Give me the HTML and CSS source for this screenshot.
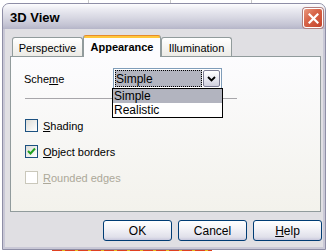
FILE: index.html
```html
<!DOCTYPE html>
<html>
<head>
<meta charset="utf-8">
<title>3D View</title>
<link rel="stylesheet" href="styles.css">
</head>
<body>
<div class="desk">
  <div class="window">
    <div class="titlebar">
      <span class="title">3D View</span>
      <span class="close"><svg width="11" height="11" viewBox="0 0 11 11"><path d="M1.5 1.5 L9.5 9.5 M9.5 1.5 L1.5 9.5" stroke="#fff" stroke-width="2.2" stroke-linecap="square"/></svg></span>
    </div>
    <div class="body">
      <div class="tabs">
        <div class="tab">Perspective</div>
        <div class="tab active">Appearance</div>
        <div class="tab">Illumination</div>
      </div>
      <div class="panel">
        <div class="scheme">
          <span class="label">Sche<u>m</u>e</span>
          <div class="combo">
            <div class="field"><span class="field-text">Simple</span></div>
            <span class="combo-btn"><svg width="9" height="6" viewBox="0 0 9 6"><path d="M1 1 L4.5 4.5 L8 1" fill="none" stroke="#000" stroke-width="1.8"/></svg></span>
            <ul class="dropdown">
              <li class="sel">Simple</li>
              <li>Realistic</li>
            </ul>
          </div>
        </div>
        <div class="sep"></div>
        <div class="check first"><span class="box"></span><span class="ctext"><u>S</u>hading</span></div>
        <div class="check"><span class="box"><svg width="9" height="9" viewBox="0 0 9 9"><path d="M1 4 L3.5 6.5 L8 1.5" fill="none" stroke="#21a121" stroke-width="2"/></svg></span><span class="ctext"><u>O</u>bject borders</span></div>
        <div class="check disabled"><span class="box"></span><span class="ctext"><u>R</u>ounded edges</span></div>
      </div>
      <div class="buttons">
        <span class="btn">OK</span>
        <span class="btn">Cancel</span>
        <span class="btn"><u>H</u>elp</span>
      </div>
    </div>
  </div>
  <div class="strip"></div>
</div>
</body>
</html>
```
FILE: styles.css
```css
* { box-sizing: border-box; }
html, body { margin: 0; padding: 0; }
body {
  width: 327px;
  height: 251px;
  overflow: hidden;
  background: #fff;
  font-family: "Liberation Sans", Arial, sans-serif;
  font-size: 11px;
  color: #000;
}
.desk {
  padding: 3px 0 0 2px;
  background-image:
    linear-gradient(to right, transparent 88px, #c8c8c8 88px, #c8c8c8 89px, transparent 89px),
    linear-gradient(to right, transparent 170px, #c8c8c8 170px, #c8c8c8 171px, transparent 171px),
    linear-gradient(to right, transparent 251px, #c8c8c8 251px, #c8c8c8 252px, transparent 252px);
  background-size: 100% 3px;
  background-repeat: no-repeat;
}
.window {
  width: 324px;
  height: 247px;
  border: 1px solid #8e8ea6;
  border-radius: 7px 7px 0 0;
  background: #e0dfe3;
  box-shadow: inset 2px 0 0 #c9c8d6, inset -2px 0 0 #c9c8d6, inset 0 -2px 0 #c9c8d6;
  display: flex;
  flex-direction: column;
}
.titlebar {
  height: 25px;
  border-radius: 6px 6px 0 0;
  background: linear-gradient(#fdfdfe 0%, #e9e9f0 25%, #d7d7e2 55%, #c3c3d3 85%, #b5b5c8 100%);
  display: flex;
  align-items: center;
  justify-content: space-between;
  padding: 0 2px 0 7px;
}
.title {
  font-weight: bold;
  font-size: 13px;
  color: #000;
  padding-top: 1px;
}
.close {
  width: 20px;
  height: 20px;
  margin-top: 3px;
  border: 1px solid #fff;
  border-radius: 3px;
  background: linear-gradient(135deg, #e9987e 0%, #d8664a 40%, #c4432a 100%);
  box-shadow: 0 0 0 1px #b08080;
  display: flex;
  align-items: center;
  justify-content: center;
}
.body {
  flex: 1;
  padding: 6px 4px 0 7px;
  display: flex;
  flex-direction: column;
}
.tabs {
  height: 21px;
  display: flex;
  align-items: flex-end;
  padding-left: 2px;
}
.tab {
  width: 71px;
  height: 19px;
  border: 1px solid #919b9c;
  border-bottom: none;
  border-radius: 3px 3px 0 0;
  background: linear-gradient(#ffffff, #ecebe6);
  display: flex;
  align-items: center;
  justify-content: center;
  padding-top: 1px;
}
.tab.active {
  width: 78px;
  height: 22px;
  margin-bottom: -1px;
  position: relative;
  z-index: 2;
  font-weight: bold;
  border-top-color: #e68b2c;
  background: linear-gradient(#ffc73c 0, #ffc73c 2px, #fcfcfe 2px);
  padding-top: 0;
}
.panel {
  height: 156px;
  border: 1px solid #919b9c;
  background: linear-gradient(#fcfcfe, #f3f2ec);
  padding: 11px 0 0 13px;
}
.scheme {
  display: flex;
  align-items: center;
  height: 21px;
}
.label { width: 89px; }
.combo {
  position: relative;
  width: 109px;
  height: 21px;
  border: 1px solid #7f9db9;
  background: #fff;
  display: flex;
  padding: 1px;
  gap: 1px;
}
.field {
  flex: 1;
  background: #b2b4bf;
  outline: 1px dotted #000;
  outline-offset: -1px;
  display: flex;
  align-items: center;
  padding-left: 1px;
  font-size: 12px;
}
.combo-btn {
  width: 17px;
  height: 17px;
  border: 1px solid #7c7c94;
  border-radius: 2px;
  background: linear-gradient(#ffffff, #e4e4ee 60%, #cfcfdd);
  display: flex;
  align-items: center;
  justify-content: center;
}
.dropdown {
  position: absolute;
  top: 19px;
  left: -2px;
  width: 111px;
  height: 30px;
  margin: 0;
  padding: 0;
  list-style: none;
  border: 1px solid #000;
  background: #fff;
  z-index: 5;
  font-size: 12px;
}
.dropdown li {
  height: 14px;
  line-height: 14px;
  padding-left: 1px;
}
.dropdown li.sel { background: #b2b4bf; }
.sep {
  margin: 9px 0 0 1px;
  width: 212px;
  height: 1px;
  background: #a7a6aa;
}
.check {
  display: flex;
  align-items: center;
  height: 13px;
  margin-top: 13px;
  margin-left: 1px;
}
.check.first { margin-top: 20px; }
.box {
  width: 13px;
  height: 13px;
  border: 1px solid #1c5180;
  background: linear-gradient(135deg, #dcdcd7, #ffffff);
  display: flex;
  align-items: center;
  justify-content: center;
}
.ctext { margin-left: 5px; }
.check.disabled .box {
  border-color: #cac8bb;
  background: #fff;
}
.check.disabled .ctext { color: #aca899; }
.buttons {
  margin-top: 8px;
  margin-right: -1px;
  display: flex;
  justify-content: flex-end;
  gap: 6px;
}
.btn {
  width: 69px;
  height: 21px;
  border: 1px solid #003c74;
  border-radius: 3px;
  background: linear-gradient(#ffffff, #f3f3f7 40%, #e0e0ea 85%, #c8c8dc);
  display: flex;
  align-items: center;
  justify-content: center;
  font-size: 12px;
}
.strip {
  margin-left: 50px;
  height: 2px;
  width: 160px;
  background: repeating-linear-gradient(to right, #e04020 0, #e04020 10px, #e8c020 10px, #e8c020 13px);
}
```
